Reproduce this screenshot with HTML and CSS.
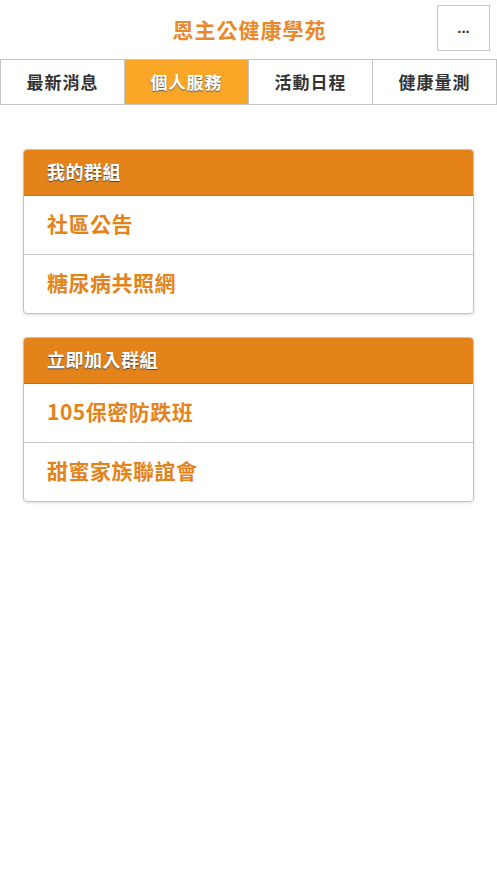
FILE: index.html
```html
<!DOCTYPE html>
<html lang="zh-Hant">
<head>
  <meta charset="UTF-8">
  <meta name="viewport" content="width=device-width, initial-scale=1.0">
  <title>恩主公健康學苑</title>
  <link rel="stylesheet" href="styles.css">
</head>
<body>
  <header class="topbar">
    <h1 class="title">恩主公健康學苑</h1>
    <button class="more">...</button>
  </header>

  <nav class="tabs">
    <a class="tab">最新消息</a>
    <a class="tab active">個人服務</a>
    <a class="tab">活動日程</a>
    <a class="tab">健康量測</a>
  </nav>

  <main class="content">
    <div class="card">
      <div class="card-head">我的群組</div>
      <a class="card-item">社區公告</a>
      <a class="card-item">糖尿病共照網</a>
    </div>

    <div class="card">
      <div class="card-head">立即加入群組</div>
      <a class="card-item">105保密防跌班</a>
      <a class="card-item">甜蜜家族聯誼會</a>
    </div>
  </main>
</body>
</html>
```

FILE: styles.css
```css
body {
  margin: 0;
  font-family: "Noto Sans CJK TC", "Noto Sans", sans-serif;
  background: #fff;
  color: #333;
}

.topbar {
  position: relative;
  height: 59px;
  display: flex;
  align-items: center;
  justify-content: center;
}

.title {
  margin: 0 0 2px;
  font-size: 21px;
  font-weight: bold;
  color: #e8892b;
  letter-spacing: 1px;
  padding-left: 2px;
}

.more {
  position: absolute;
  right: 7px;
  top: 5px;
  width: 53px;
  height: 46px;
  background: #fff;
  border: 1px solid #c8c8c8;
  font-family: "Liberation Sans", sans-serif;
  font-size: 15px;
  font-weight: bold;
  color: #333;
  padding: 0 0 2px;
}

.tabs {
  display: flex;
  border-top: 1px solid #c4c4c4;
  border-bottom: 1px solid #c4c4c4;
  height: 44px;
}

.tab {
  flex: 1;
  display: flex;
  align-items: center;
  justify-content: center;
  padding-bottom: 2px;
  font-size: 17px;
  font-weight: bold;
  color: #333;
  letter-spacing: 1px;
  border-left: 1px solid #c4c4c4;
  text-shadow: 0 1px 0 #fff;
}

.tab:last-child {
  border-right: 1px solid #c4c4c4;
}

.tab.active {
  background: #faa626;
  color: #fff;
  text-shadow: 0 1px 1px #555;
}

.content {
  padding: 44px 23px;
  display: flex;
  flex-direction: column;
  gap: 23px;
}

.card {
  border: 1px solid #c4c4c4;
  border-radius: 4px;
  box-shadow: 0 1px 3px rgba(0, 0, 0, 0.15);
  overflow: hidden;
}

.card-head {
  background: #e4831a;
  color: #fff;
  font-size: 18px;
  font-weight: bold;
  letter-spacing: 0.5px;
  height: 45px;
  line-height: 43px;
  padding-left: 23px;
  text-shadow: 0 1px 1px #444;
  border-bottom: 1px solid #c07020;
}

.card-item {
  display: block;
  height: 58px;
  line-height: 54px;
  padding-left: 23px;
  font-size: 21px;
  font-weight: bold;
  letter-spacing: 0.5px;
  color: #e4831a;
  border-bottom: 1px solid #c4c4c4;
}

.card-item:last-child {
  border-bottom: none;
}
```
